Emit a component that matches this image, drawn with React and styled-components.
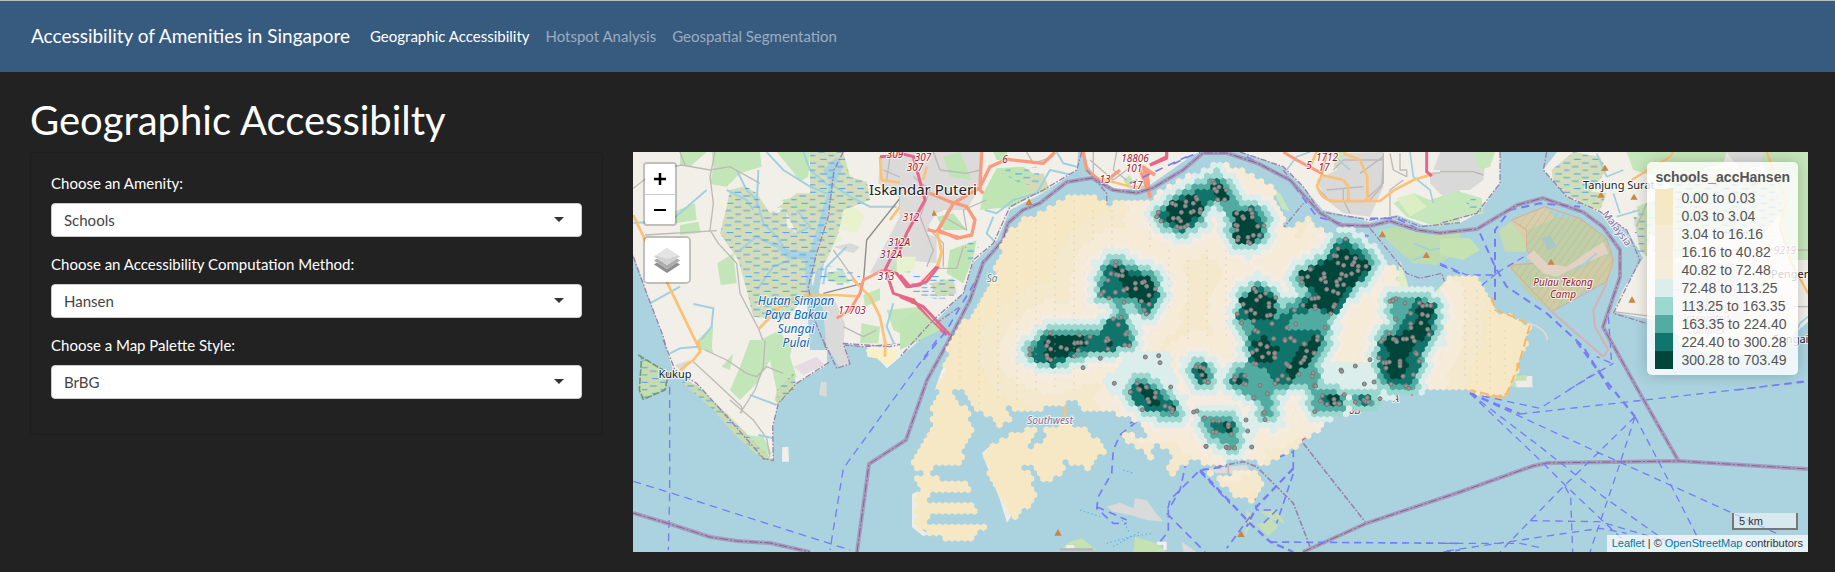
import React from "react";
import styled, { createGlobalStyle } from "styled-components";

const GlobalStyle = createGlobalStyle`
  * { box-sizing: border-box; }
  body {
    margin: 0;
    background: #222;
    color: #fff;
    font-family: Lato, "Liberation Sans", sans-serif;
    font-size: 15px;
  }
`;

/* ---------- page ---------- */

const Navbar = styled.nav`
  display: flex;
  align-items: center;
  min-height: 72px;
  padding: 0 31px 2px;
  background: #375a7f;
  border-top: 1px solid #bcbcbc;
`;
const Brand = styled.a`
  margin-right: 20px;
  color: #fff;
  font-size: 19px;
  line-height: 28px;
  text-decoration: none;
`;
const NavLinks = styled.div`
  display: flex;
  gap: 16px;
`;
const NavLink = styled.a`
  color: ${(p) => (p.$active ? "#fff" : "rgba(255, 255, 255, 0.5)")};
  line-height: 24px;
  text-decoration: none;
`;
const Main = styled.main`
  padding: 24px 27px 20px 30px;
`;
const Title = styled.h1`
  margin: 0 0 8px;
  font-size: 40px;
  font-weight: 400;
  line-height: 48px;
`;
const Columns = styled.div`
  display: grid;
  grid-template-columns: 573fr 1175fr;
  gap: 30px;
  align-items: start;
`;
const Panel = styled.form`
  padding: 18px 20px 20px;
  border: 1px solid #1d1d1d;
  border-radius: 4px;
`;
const Field = styled.div`
  margin-bottom: 15px;
`;
const Label = styled.label`
  display: block;
  margin-bottom: 7px;
  line-height: 25px;
`;
const SelectWrap = styled.div`
  position: relative;
  color: #333;
`;
const Select = styled.select`
  display: block;
  width: 100%;
  height: 34px;
  padding: 0 32px 0 12px;
  border: 1px solid #ccc;
  border-radius: 4px;
  background: #fff;
  color: #444;
  font: inherit;
  appearance: none;
`;
const Caret = styled.svg`
  position: absolute;
  top: 14px;
  right: 18px;
  width: 10px;
  height: 5px;
  fill: #333;
  pointer-events: none;
`;

/* ---------- map ---------- */

const MapFrame = styled.section`
  position: relative;
  height: 400px;
  overflow: hidden;
  background: #aad3df;
  font-family: "Liberation Sans", Arial, sans-serif;
`;
const MapCanvas = styled.svg`
  display: block;
  width: 100%;
  height: 100%;
`;
const Controls = styled.div`
  position: absolute;
  top: 10px;
  left: 10px;
  display: flex;
  flex-direction: column;
  align-items: flex-start;
  gap: 10px;
`;
const Bar = styled.div`
  border: 2px solid rgba(0, 0, 0, 0.2);
  border-radius: ${(p) => (p.$round ? 5 : 4)}px;
  background-clip: padding-box;
  overflow: hidden;
`;
const MapButton = styled.button`
  display: flex;
  align-items: center;
  justify-content: center;
  width: ${(p) => p.$size}px;
  height: ${(p) => p.$size}px;
  padding: 0;
  border: 0;
  background: #fff;
  color: #000;
  & + & {
    border-top: 1px solid #ccc;
  }
`;
const Legend = styled.aside`
  position: absolute;
  top: 10px;
  right: 10px;
  padding: 6px 8px;
  border-radius: 5px;
  background: rgba(255, 255, 255, 0.8);
  box-shadow: 0 0 15px rgba(0, 0, 0, 0.2);
  color: #555;
  font-size: 14px;
  line-height: 18px;
`;
const LegendTitle = styled.strong`
  display: block;
  padding-bottom: 3px;
`;
const LegendList = styled.ul`
  margin: 0;
  padding: 0;
  list-style: none;
`;
const LegendRow = styled.li`
  display: flex;
  gap: 8px;
`;
const Swatch = styled.span`
  width: 18px;
  height: 18px;
  background: ${(p) => p.$color};
`;
const MapFooter = styled.div`
  position: absolute;
  right: 0;
  bottom: 0;
  display: flex;
  flex-direction: column;
  align-items: flex-end;
  gap: 5px;
  color: #333;
  font-size: 11px;
`;
const ScaleLine = styled.div`
  width: 66px;
  height: 17px;
  margin-right: 10px;
  padding-left: 5px;
  border: 2px solid #777;
  border-top: 0;
  background: rgba(255, 255, 255, 0.5);
  line-height: 16px;
`;
const Attribution = styled.div`
  padding: 0 5px;
  background: rgba(255, 255, 255, 0.7);
  line-height: 17px;
  a {
    color: #0078a8;
    text-decoration: none;
  }
`;
const PlaceName = styled.text`
  fill: ${(p) => p.$color || "#222"};
  font-family: "Noto Sans", sans-serif;
  font-size: ${(p) => p.$size || 10}px;
  font-style: ${(p) => (p.$italic ? "italic" : "normal")};
  text-anchor: ${(p) => p.$anchor || "middle"};
  paint-order: stroke;
  stroke: rgba(255, 255, 255, 0.75);
  stroke-width: 2px;
  stroke-linejoin: round;
`;

/* ---------- accessibility surface ---------- */

const parse = (s) => {
  const n = s.match(/-?\d+/g).map(Number);
  return n.reduce((a, v, i) => (i % 2 ? a : [...a, [v, n[i + 1]]]), []);
};
/* Detail sheets are drawn at three units to one map unit. */
const SHEETS = {
  A: [630, 150], B: [630, 340], C: [900, 150], D: [900, 350],
  E: [1130, 150], F: [1130, 340], G: [1440, 150], H: [1440, 340],
};
const place = (id, s) => parse(s).map(([x, y]) => [SHEETS[id][0] + x / 3, SHEETS[id][1] + y / 3]);

const LAND = [
  "950,336 968,317 980,300 985,286 993,278 997,262 1001,250 1008,233 1023,218 1040,213 1057,203 1067,195 1093,193 1110,205 1125,200 1147,202 1167,187 1200,170 1217,163 1230,165 1253,175 1273,187 1275,200 1285,213 1282,230 1307,218 1330,233 1350,235 1377,253 1397,270 1400,285 1417,293 1437,293 1447,278 1457,277 1480,278 1492,297 1495,310 1512,316 1530,325 1528,340 1518,367 1507,390 1500,397 1473,392 1460,388 1440,388 1410,393 1383,401 1343,415 1320,428 1293,450 1277,458 1267,465 1240,457 1220,465 1187,460 1177,474 1165,472 1172,453 1160,445 1147,440 1137,422 1113,413 1087,410 1070,400 1060,405 1047,403 1040,411 1023,413 1003,403 1010,420 1000,425 980,413 967,397 955,386 953,392 968,413 975,433 963,447 965,467 928,468 928,478 968,480 968,490 928,492 928,502 975,503 975,513 928,515 928,525 985,526 967,543 933,535 915,528 915,493 922,491 915,480 922,475 913,463 917,447 932,430 930,417 937,397 943,370",
  "982,453 1000,440 1033,425 1038,433 1026,447 1030,453 1043,440 1047,428 1067,423 1087,428 1105,450 1088,470 1057,457 1068,472 1043,482 1033,463 1020,463 1032,477 1037,498 1015,518 1000,500",
  "1207,470 1225,476 1255,468 1263,485 1250,502 1233,495",
  "1120,438 1130,431 1155,445 1152,458",
].map(parse);

const TEAL = {
  7: [
    ["E", "75,200 120,150 180,115 235,90 260,75 310,120 320,160 380,170 410,215 400,265 360,290 320,280 300,240 295,185 270,155 230,165 210,220 150,250 110,230"],
    ["C", "610,350 650,325 700,350 760,370 780,420 750,490 720,485 690,455 670,470 700,580 640,600 570,610 450,645 380,610 400,580 450,540 540,545 600,545 640,500 660,460 600,440 600,400"],
    ["E", "500,370 540,345 590,320 605,280 645,260 700,300 735,340 700,390 650,430 610,490 590,540 590,580 560,620 565,690 560,730 600,715 640,735 640,775 555,790 550,760 530,700 480,710 430,720 430,810 390,800 400,760 360,740 300,700 320,660 365,640 350,560 330,520 320,490 340,430 380,400 430,430 450,470 490,460 540,430 500,400"],
    ["E", "780,440 830,450 870,440 920,460 915,560 880,600 870,660 850,710 840,725 780,715 750,690 745,620 750,560 800,520 780,480"],
    ["F", "670,160 730,160 730,200 680,200"],
    ["D", "690,100 720,80 770,110 830,160 840,195 790,195 740,185 680,130"],
    ["D", "870,50 890,35 930,60 935,100 900,100"],
    ["F", "220,230 260,235 310,235 330,270 315,330 270,310 235,280"],
  ],
  8: [
    ["E", "80,200 130,150 190,130 235,110 265,85 300,130 295,155 250,145 215,180 190,225 150,245 115,225"],
    ["E", "310,190 360,170 405,215 395,260 350,288 308,268"],
    ["C", "615,360 650,335 690,360 760,385 775,425 745,495 715,450 640,445 605,435"],
    ["C", "630,510 670,500 695,590 620,600 540,610 450,650 390,620 430,555 540,550 600,555"],
    ["E", "505,375 600,310 610,280 650,265 725,340 690,395 620,485 590,490 560,480 500,490 470,540 590,550 560,610 530,640 480,705 440,700 400,650 360,635 360,560 370,520 320,500 330,450 380,410 435,440 435,510 500,470 545,430"],
    ["E", "300,690 345,665 355,705 310,705"],
    ["E", "860,450 918,460 905,555 880,600 850,700 780,700 750,660 745,580 820,530"],
    ["F", "575,165 625,160 630,195 580,200"],
    ["F", "690,165 725,170 718,198 690,195"],
    ["D", "695,100 770,115 830,175 805,192 730,180 690,130"],
    ["D", "878,48 918,42 925,92 898,95"],
    ["F", "245,250 318,245 312,282 252,280"],
  ],
  9: [
    ["E", "115,155 205,132 218,170 195,205 150,243 118,215"],
    ["E", "243,92 298,120 288,155 250,135"],
    ["E", "315,190 360,182 398,235 360,280 315,272"],
    ["C", "640,340 670,365 755,385 768,430 740,470 680,430 650,380"],
    ["C", "435,560 540,555 562,590 480,620 445,645 430,620"],
    ["C", "605,570 638,560 625,590"],
    ["E", "330,455 375,412 435,450 430,505 365,508"],
    ["E", "510,370 610,325 615,298 650,300 725,345 640,430 600,485 525,478 560,425 510,395"],
    ["E", "370,580 395,555 445,600 445,625 365,640"],
    ["E", "500,600 565,555 562,605 490,685 470,650"],
    ["E", "310,690 345,680 345,705"],
    ["E", "865,460 910,460 895,560 840,590 825,690 775,685 765,640 780,620 750,570 850,535"],
    ["F", "595,172 622,172 612,192"],
    ["D", "715,105 760,125 775,165 738,165"],
    ["D", "800,165 828,172 815,190"],
    ["D", "883,48 918,50 913,88"],
    ["F", "272,245 305,248 298,272"],
  ],
};
const PALE = [
  ["F", "560,60 640,60 760,60 750,160 560,160"],
  ["D", "690,0 800,0 830,100 640,130 610,100"],
  ["F", "180,90 380,100 360,145 260,140"],
  ["F", "210,240 380,230 370,330 230,330"],
  ["E", "760,430 820,425 800,540 760,560"],
].map(([s, p]) => place(s, p));
const AREAS = Object.fromEntries(
  Object.entries(TEAL).map(([k, v]) => [k, v.map(([s, p]) => place(s, p))])
);

const inside = (x, y, poly) => {
  let hit = false;
  for (let i = 0, j = poly.length - 1; i < poly.length; j = i++) {
    const [xi, yi] = poly[i];
    const [xj, yj] = poly[j];
    if (yi > y !== yj > y && x < ((xj - xi) * (y - yi)) / (yj - yi) + xi) hit = !hit;
  }
  return hit;
};
const within = (x, y, list) => list.some((p) => inside(x, y, p));
const distance = (x, y, poly) =>
  Math.min(
    ...poly.map(([ax, ay], i) => {
      const [bx, by] = poly[(i + 1) % poly.length];
      const dx = bx - ax;
      const dy = by - ay;
      const t = Math.max(0, Math.min(1, ((x - ax) * dx + (y - ay) * dy) / (dx * dx + dy * dy)));
      return Math.hypot(x - ax - t * dx, y - ay - t * dy);
    })
  );

const classify = (x, y) => {
  if (within(x, y, AREAS[9])) return 9;
  if (within(x, y, AREAS[8])) return 8;
  if (within(x, y, AREAS[7])) return 7;
  const d = Math.min(...AREAS[7].map((p) => distance(x, y, p)));
  if (d < 5) return 6;
  if (d < 11 || within(x, y, PALE)) return 5;
  if (d < 17) return 4;
  if (d < 30) return 3;
  if (d < 48) return 2;
  return 1;
};
const FILLS = ["", "#f6e8c4", "#f5e9cd", "#f5ebd6", "#f5ecdf", "#dbeeeb", "#9ad8cf", "#52aba1", "#10746b", "#004539"];
const HEX_PATHS = (() => {
  const out = FILLS.map(() => "");
  for (let row = 0; row < 72; row++) {
    const y = 160 + row * 5.4;
    for (let col = 0; col < 102; col++) {
      const x = 908 + col * 6.3 + (row % 2 ? 3.15 : 0);
      const level = classify(x, y);
      if (level > 5 || within(x, y, LAND) || (level === 5 && y < 395)) {
        out[level] += `M${x.toFixed(1)} ${(y - 3.8).toFixed(1)}l3.3 1.9v3.8l-3.3 1.9l-3.3 -1.9v-3.8z`;
      }
    }
  }
  return out;
})();

const SCHOOLS = [
  ["E", "80,200 93,213 85,187 127,160 137,165 166,168 168,155 198,142 201,148 190,160 211,178 210,187 190,184 183,187 154,187 130,205 145,205 152,213 141,230 152,233 164,231 173,225 249,93 253,100 254,117 267,111 260,124 289,120 263,149 284,149 320,190 338,200 341,205 361,179 366,190 367,201 317,225 322,227 321,240 325,262 323,270 354,262 355,276 360,280 370,256 388,256 383,229 402,227 647,267 624,296 612,317 620,318 650,323 676,325 708,349 624,339 641,346 667,344 672,337 685,349 684,362 665,371 648,377 635,372 630,387 641,404 620,395 622,406 590,418 610,424 624,430 573,388 582,371 583,382 587,396 541,358 533,380 516,384 515,397 545,446 555,445 565,443 519,466 555,468 556,476 614,464 611,470 602,491 493,481 497,522 372,416 378,425 391,439 380,450 407,430 437,443 417,460 417,470 340,463 363,480 375,490 349,486 322,492 335,519 371,513 375,541 384,546 426,521 412,497 421,495 431,566 471,533 465,568 482,564 493,572 391,582 411,590 380,600 367,607 397,621 433,622 435,609 585,533 563,560 562,570 523,581 530,603 552,609 525,622 798,446 780,454 789,452 825,459 868,459 878,468 890,466 902,467 842,490 877,493 893,497 797,508 873,519 842,521 843,533 893,538 897,554 777,550 760,568 753,575 790,567 797,570 800,575 820,567 830,567 848,562 853,573 857,608"],
  ["C", "648,335 646,347 633,371 649,374 656,376 667,362 667,377 624,391 611,425 603,434 627,444 646,427 671,421 681,416 706,400 707,416 733,395 727,398 740,409 766,417 747,436 672,457 724,454 747,463 733,480 739,492 640,507 663,502 655,524 680,548 677,553 622,565 625,570 618,573 674,585 688,587 624,597 601,625 451,549 445,575 440,587 452,597 483,592 500,597 440,616 443,625 390,598 389,614 539,555 524,580 533,578 543,578 560,578 570,560 535,601 523,618 736,621 776,617"],
  ["D", "452,30 549,53 643,100 780,38 711,100 715,117 719,119 739,111 691,126 767,128 765,142 743,148 747,156 727,179 795,168 810,173 817,178 816,185 812,111 888,50 901,51 911,55 906,75 914,93 925,97 881,186 891,183 914,204 939,212 957,213 939,246 949,247 918,289 980,292 985,230"],
  ["F", "295,253 348,240 353,273 304,283 228,319 289,322 297,324 314,324 365,321 403,217 405,239 372,173 412,161 390,136 371,71 378,72 315,112 313,120 344,107 342,131 347,133 457,107 435,131 443,119 475,117 469,71 474,76 480,80 513,68 521,60 553,40 507,103 550,99 547,109 553,137 557,138 554,215 571,183 577,167 591,193 612,178 614,190 628,191 643,164 633,90 635,94 676,78 676,186 703,132 732,126 702,180 708,185 715,186 712,173 750,176 720,59 746,53 761,68 769,68 778,66 768,84 810,63 810,70 810,78 819,109 783,133 828,138 836,145 850,104 867,64 857,40 860,42 391,13 411,20 435,53 416,39 434,40 465,2 493,3 523,12"],
].flatMap(([s, p]) => place(s, p));

/* ---------- base map drawing ---------- */

const Sheet = ({ id, children }) => (
  <g transform={`translate(${SHEETS[id][0]} ${SHEETS[id][1]}) scale(${1 / 3})`}>{children}</g>
);
const Line = ({ d, c, w, dash, o }) => (
  <path d={d} fill="none" stroke={c} strokeWidth={w} strokeDasharray={dash} opacity={o} strokeLinejoin="round" />
);
const ORANGE = "#fbc175";
const CORAL = "#f99b7f";
const PINK = "#e8668a";
const GREY = "#bdbab8";
const RIVER = "#a3d0e0";
const FERRY = "#777df7";
const ADMIN = "#9a83ac";

const Land = () => (
  <g fill="#f2efe9">
    <path d="M633 152H827L835 180L812 290L810 330L827 350V365L797 383L778 403L773 427V461L763 457L730 420L697 387L673 370L663 337L647 293L633 254Z" />
    <path d="M838 152H1078L1077 170L1043 193L1010 210L997 240L973 263L963 293L930 327L900 357L887 368L866 347L843 343L849 364L840 368L822 310L819 290L832 220Z" />
    <path d="M1083 152L1085 162L1097 178L1117 190L1147 187L1193 155L1200 152Z" />
    <path d="M1240 152L1257 157L1283 167L1303 187L1323 210L1370 222L1397 215L1423 225L1460 223L1480 212L1500 183V152Z" />
    <path d="M1557 152L1543 170L1567 197L1600 213L1627 230L1643 258L1623 290L1613 312L1653 320L1690 350L1730 357L1775 350L1808 322V152Z" />
  </g>
);

const WestSheets = () => (
  <>
    <Sheet id="A">
      <g fill="#c3e6b8">
        <path d="M245 6H390L395 50L330 70L290 110L240 102L250 50ZM150 6H230L180 50L150 45ZM440 6H540L535 80L510 95L485 60ZM120 190L195 160L200 210L120 222ZM150 225L205 215L212 248L150 255ZM262 340L310 310L320 400L272 405ZM200 572L250 525L245 600H205ZM390 570L450 540L480 600H400ZM455 150L500 140L530 200L480 190ZM580 370L640 360L660 400L600 395Z" />
        <path d="M700 435L750 415L750 450L705 470ZM770 480L870 470L920 520L850 570L790 540ZM760 330L800 310L850 340L840 370L780 360ZM695 520L750 530L745 580H690ZM890 6L950 20L930 60L880 50ZM860 100L910 110L900 160L850 150Z" />
      </g>
      <g fill="#dadada">
        <path d="M750 20L870 6H990V160L920 190L850 290L760 370L720 370L830 160L745 100ZM545 435L610 440L645 520L640 600H590ZM840 240L920 260V340L830 330ZM610 290L660 280L690 290L670 310Z" />
      </g>
      <path d="M620 190L670 165L705 200L680 250L620 235ZM570 265L640 260L600 300L570 330ZM800 320L860 310L850 360L800 370Z" fill="#e9f2cf" />
      <path d="M290 170L300 120L345 108L380 130L420 190L500 130L540 130V6H640L660 80L710 95L720 150L640 180L625 250L590 330L545 380L530 440L460 510L370 500L350 420L325 330L270 250Z" fill="#d3ddb9" />
      <path d="M410 110L440 100L425 150L460 180L440 190L400 160ZM470 190L500 250L470 230Z" fill="#f2efe9" />
      <path d="M620 20L640 50L610 110L590 200L560 300L545 400L580 480L590 600H540L530 440L525 330L470 325L420 270L480 300L540 305L580 170L600 100L580 60Z" fill="#aad3df" />
      <g fill="none" stroke={RIVER} strokeWidth="6">
        <path d="M320 60L350 120L380 150L400 220L440 260L480 320L540 320M385 60L380 170M290 120L350 150L370 180M410 6L460 60L540 110L590 130M330 300L380 260L440 290M380 420L430 350L480 330M10 218L120 215L230 120M60 460L150 410M190 462L250 475L245 530L205 580M500 180L540 230L500 250M600 100L660 140L720 170L800 170M520 6L540 60L600 110M580 400L590 350L650 290M790 460L770 530L800 600" />
      </g>
      <path d="M290 170L300 120L345 108L380 130L420 190L500 130L540 130V6H640L660 80L710 95L720 150L640 180L625 250L590 330L545 380L530 440L460 510L370 500L350 420L325 330L270 250ZM570 340L690 370V410L570 400ZM840 380L930 370L970 420L930 450L840 430Z" fill="url(#marsh)" />
      <g fill="none" stroke={GREY} strokeWidth="4">
        <path d="M10 115L80 60L155 45L240 60L300 50L390 100M255 6L240 80L250 160L240 240L265 280L320 340L330 430L385 535L410 600M45 255L260 242M150 6L165 45M610 300L660 370L690 410M640 530L700 560L740 540M890 60L930 120L990 150M900 170L880 220L940 280L940 350M760 60L830 90M780 20L770 90M920 20L900 90" />
        <path d="M825 6L830 120L710 270L700 400L580 430" stroke="#8b8b88" />
      </g>
      <Line c={ORANGE} w={8} d="M10 195L50 280L110 395L190 560L210 600M385 538L470 450L540 435L620 435L690 440M665 385L720 440L750 500L770 600M750 20L755 90L830 100L890 60L885 30M920 240L935 310L920 350M780 210L810 170L815 110" />
      <Line c={CORAL} w={9} d="M620 505L660 480L690 430L700 390L760 360M810 185L870 235L920 245L990 262M920 245L970 160L990 150M970 160L900 120" />
      <Line c={PINK} w={9} d="M750 20L850 14L885 150L840 220L790 310L765 360L800 370L830 410L870 405L920 350M770 370L790 430L850 450L900 510L950 555M850 14L930 6" />
      <Line c={ADMIN} w={4} dash="18 5 5 5" d="M640 6L612 60L595 200L560 310L535 410L550 500L590 600M10 320L50 430L100 560L110 600M640 585L700 590L830 580L990 470" />
      <path d="M903 197L912 180L921 197ZM843 461L852 443L861 461Z" fill="#cd853f" />
    </Sheet>
    <Sheet id="B">
      <path d="M330 80L360 0H490L480 50L500 110L440 150L420 60L380 130L330 180L300 150ZM205 0H240L250 40L220 30ZM345 285L400 290L425 340L400 350ZM275 80L310 40L300 90Z" fill="#c3e6b8" />
      <path d="M440 150L490 100L500 140L445 195L435 180ZM150 120L200 135L300 230L430 362H400L310 280L250 210L160 130ZM35 50L115 100L105 150L35 178L25 150Z" fill="#c9dcae" />
      <path d="M440 150L490 100L500 140L445 195ZM150 120L200 135L430 362H400L250 210ZM35 50L115 100L105 150L35 178L25 150Z" fill="url(#marsh)" />
      <path d="M490 80L560 50L585 75L520 105Z" fill="#e6dbe3" />
      <path d="M135 75L180 60L160 100ZM580 0L630 85L660 70L640 0ZM573 125H590V170L567 165Z" fill="#dadada" />
      <path d="M457 322L475 320L477 365H456ZM706 30L740 20L870 0L770 85L750 55L720 50Z" fill="#f2efe9" />
      <path d="M710 28L800 30V60L770 75L740 55L712 50Z" fill="#fbefc5" />
      <Line c={GREY} w={4} d="M190 65L260 130L335 200L335 218M405 0L400 80L375 150L330 220M225 30L290 60L350 100L380 110L410 80L460 100M300 180L370 240L410 295L420 350" />
      <Line c={RIVER} w={6} d="M360 165L440 195M385 285L430 295M120 40L150 25L205 20" />
      <Line c={ORANGE} w={8} d="M205 0L210 35L190 60L150 90M765 0V50" />
      <Line c="#6e9a75" w={5} dash="20 5" d="M25 45L115 100L105 150L40 178L28 150L35 50" />
      <Line c={ADMIN} w={4} dash="18 5 5 5" d="M100 0L135 90L200 130L300 240L400 355L430 362L428 260L445 190L500 130L600 65M580 0L620 85L660 72L640 10L780 20L870 0" />
      <Line c={FERRY} w={4} dash="24 16" d="M119 140V460L115 630M10 424L120 458L660 630M920 0L640 385L600 630" />
    </Sheet>
    <Sheet id="C">
      <path d="M0 6H240V110L200 180L100 180L60 320H0Z" fill="#dcdbd9" />
      <path d="M250 130L290 55L370 50L420 85L410 130L340 170L240 180ZM130 20L180 6L215 90L150 80ZM110 200L160 190L200 240L130 240ZM150 300L230 270L220 320L190 400L140 370ZM0 510L60 480L120 540L60 570L0 600ZM280 6L320 6L330 30L290 30ZM670 90L690 75L700 100L680 108Z" fill="#bfe5b4" />
      <path d="M370 80L430 70L450 120L390 140ZM90 400L160 385L170 430L110 440Z" fill="#d0dcb7" />
      <path d="M290 60L410 50L430 110L360 100ZM60 380L170 390L160 450L60 440ZM200 260L240 280L220 340L190 330Z" fill="url(#marsh)" />
      <Line c={GREY} w={4} d="M100 6L120 60L200 70L240 60M40 80L90 120L60 200L100 300L80 350M110 355L170 355L190 290M130 200L200 240L190 180L260 150M380 6L400 40L460 20M570 30L640 90L720 30M580 6V80M650 6L640 60L680 90" />
      <Line c={RIVER} w={6} d="M255 180L290 190L340 150L410 130L450 60L540 80M280 200L260 250L290 280M470 6L490 40L530 50" />
      <Line c={CORAL} w={10} d="M245 6L240 110M240 110L270 50L320 28L430 40L465 6M245 110L160 160L115 240L170 265L215 255L225 210L200 170L150 155L90 130M250 130L235 115M550 6L560 60L610 100L660 60M730 50L750 140L740 60L765 75" />
      <Line c={ORANGE} w={7} d="M600 85L690 110L740 110M110 245L125 300L115 350L70 400M70 90L80 50" />
      <Line c={PINK} w={9} d="M0 10L40 20L75 150L20 250L0 300M115 350L80 395L30 410L0 375M0 440L70 470L150 555M750 45L800 25V6" />
      <Line c={ADMIN} w={4} dash="18 5 5 5" d="M545 6L530 60L430 120L330 170L280 280L220 330L190 430L100 510L0 620M560 60L620 130V170" />
      <Line c={FERRY} w={5} dash="24 18" d="M70 630L140 540L240 370L250 330" />
      <Line c={FERRY} w={5} dash="24 18" d="M820 42L870 18L900 8" />
      <path d="M376 166L387 145L398 166Z" fill="#cd853f" />
    </Sheet>
  </>
);

const EastSheets = () => (
  <>
    <Sheet id="E">
      <path d="M430 120L450 130L480 185L455 175ZM620 0H650V70L610 50ZM790 160L850 130L900 150L990 120V215L920 230L830 200Z" fill="#c6e6bb" />
      <path d="M560 90L620 60L640 10L760 6L760 110L720 200L640 190L590 150ZM900 70L990 60V120L940 140L900 100ZM930 6H990V60H910Z" fill="#d9d9d9" />
      <path d="M745 240L800 230L900 255L990 245V300L920 345L850 340L790 290Z" fill="#bddcb0" />
      <path d="M800 145L850 130L890 170L840 200ZM810 330L800 400L830 430L940 430V400L900 440L840 425Z" fill="#dcefc4" />
      <Line c={GREY} w={4} d="M610 60L640 30H760L755 110L720 150M640 115V150M560 110L600 155H700L760 100V10M590 120L700 110M690 70L760 20M780 10L790 60L830 80V60H810V10M900 70L990 65M640 150L660 190M820 90L780 120V200" />
      <Line c={RIVER} w={5} d="M470 60L500 20L540 6M600 6L660 60M840 6L850 80L900 120L910 160M950 170L990 160M850 280L900 300L960 290M850 330L900 310M560 190L700 205" />
      <Line c={ORANGE} w={8} d="M560 110L575 75M540 50L560 6M560 105C570 140 590 155 620 153H750L790 122L850 90L910 72M640 10L690 30L712 80V150M640 90L655 110V150M575 75L640 90" />
      <Line c={CORAL} w={9} d="M460 6L500 30L575 70L590 6M30 60L60 140L40 50L75 75" />
      <Line c={PINK} w={9} d="M890 6V65L905 78M60 45L110 20V6" />
      <Line c={ADMIN} w={4} dash="18 5 5 5" d="M330 6L460 50L520 110L570 185L720 210L800 200L870 230L990 218M455 240L520 160M630 225V290M720 235L830 370L870 385L935 370L945 400M460 60L475 80" />
      <Line c={FERRY} w={5} dash="24 18" d="M0 100L170 20M350 20L480 90L560 200L640 222M650 250L720 258M720 205L800 205L860 235M930 345L990 370" />
      <path d="M746 262L757 242L768 262ZM878 324L889 305L900 324Z" fill="#cd853f" />
    </Sheet>
    <Sheet id="G">
      <path d="M0 6H140L130 90L90 120L0 120Z" fill="#d9d9d9" />
      <path d="M100 6H165L150 50L120 60ZM0 140L60 125L125 145L130 190L0 215ZM560 6H860L850 40L780 60L690 90L580 60ZM590 170L640 150L700 200L650 265L600 230ZM950 6H1104V330H1050L1000 120ZM640 200L760 190V300L700 330Z" fill="#c6e6bb" />
      <path d="M0 265L90 265L120 300L70 330L0 315Z" fill="#c4e2b2" />
      <path d="M335 60L400 6L480 20L500 60L450 130L390 150L340 100ZM400 120L500 130L480 180L410 160ZM580 200L640 210L620 320L600 300ZM690 60L1000 90L1030 180L960 260L690 230Z" fill="#d3ddb9" />
      <path d="M335 60L400 6L480 20L500 60L450 130L390 150L340 100ZM400 120L500 130L480 180L410 160ZM580 180L640 190L620 320L590 320ZM640 100L1000 100L1030 180L960 260L640 230ZM70 140L120 150L125 190L90 180Z" fill="url(#marsh)" />
      <path d="M860 6H970L960 50L900 60ZM700 340H900L930 500L760 560L690 480Z" fill="#dcdcdc" />
      <path d="M560 530L640 510L720 560L700 600Z" fill="#aad3df" />
      <path d="M175 240L215 215L315 170L345 200L420 205L500 265L520 330L505 390L420 430L335 485L260 425L205 345L285 335L260 300L195 305Z" fill="#bfcfa8" />
      <path d="M215 210L315 170L345 205L265 240L260 290Z" fill="#d7cfac" />
      <path d="M175 240L215 215L265 290L255 305L195 305Z" fill="#c5dcb1" />
      <path d="M355 400L505 310L520 350L500 395L420 430L335 485L270 425Z" fill="#cdcca5" />
      <path d="M215 210L315 170L420 205L500 265L520 330L500 395L335 485L205 345L290 340L260 300V240Z" fill="url(#camp)" stroke="#dcaa93" strokeWidth="3" />
      <path d="M305 265L330 255L350 290L325 300Z" fill="#a9c6c8" />
      <path d="M260 320L280 300L320 340L380 350L430 315L490 275L505 310L420 345L350 380L310 370Z" fill="#e3d2c3" />
      <Line c={RIVER} w={5} d="M470 10L500 80L550 60M530 200L600 180M540 190L520 130M410 360L470 310M690 130L760 200L880 150L960 220M1104 500L1080 520L1060 560" />
      <Line c={ORANGE} w={7} d="M575 90L690 20L700 6M980 6L1000 60L1040 150L1020 230L1050 330L1104 430" />
      <Line c={GREY} w={4} d="M0 65H100L130 75M520 485L640 500M590 230L620 160M640 300L1104 300M1060 470H1104M800 340V560M700 420L900 420" />
      <Line c="#d5b2b2" w={6} d="M335 485L490 620L505 600L465 530L460 480L500 400" />
      <Line c={ADMIN} w={4} dash="18 5 5 5" d="M180 6L180 100L110 190L0 220M320 6L310 60L380 140L480 185L560 240L600 330L550 430L520 490L620 520" />
      <Line c={FERRY} w={6} dash="24 16" d="M120 250L165 350L200 410L320 490L430 590L510 720M165 450V240L210 180L300 160L420 170" />
      <Line c={FERRY} w={4} dash="22 14" d="M0 340L80 375H160L260 315M170 370L120 410M385 720L520 640M505 500L515 640L470 620M890 720L1104 692" />
      <path d="M484 62L495 44L506 62ZM472 143L483 124L494 143ZM571 149L582 131L593 149ZM565 458L576 439L587 458ZM322 344L333 326L344 344Z" fill="#cd853f" />
      <path d="M205 690L260 675L280 710H200Z" fill="#c2dfbb" />
      <path d="M245 515Q320 530 322 570" fill="none" stroke="#ddd9d4" strokeWidth="5" />
    </Sheet>
  </>
);

const SeaSheets = () => (
  <>
    <Sheet id="D">
      <path d="M620 470L660 458L700 475L705 445L740 450L765 485L790 515L740 510L690 495L640 485ZM845 575L890 606H850Z" fill="#dadada" />
      <path d="M480 600L510 575L545 565L590 600ZM700 606L705 560L770 580L800 606ZM440 240L460 225V250Z" fill="#c4e2b2" />
      <path d="M770 575H800V600H790V585H772ZM500 585H520L525 595H498ZM125 60L145 35L130 100L105 120ZM215 145L240 125L255 145L230 175Z" fill="#f2efe9" />
      <Line c={ORANGE} w={7} d="M495 148V205M228 98L240 112M375 297L385 312" />
      <Line c={FERRY} w={5} dash="24 16" d="M710 215L660 255L640 300L635 370L595 440L590 475L640 520H680M590 470L680 510M860 330L840 420L805 480V545L780 575M970 350L900 360L810 450L800 490L915 606M900 365L990 460" />
      <path d="M463 557L474 537L485 557Z" fill="#cd853f" />
      <path d="M480 598H580" stroke="#b9b3bc" strokeWidth="7" />
      <path d="M620 580L690 560L760 550M640 590L720 545M540 480L600 500M670 360L700 370M660 500L690 550" fill="none" stroke="#68b4dc" strokeWidth="4" strokeDasharray="4 8" />
    </Sheet>
    <Sheet id="F">
      <path d="M380 555L420 535L445 560L415 588ZM390 515L440 510L465 550L430 540ZM350 510L370 530L345 595Z" fill="#c4dfb6" />
      <path d="M230 385L290 380L350 375L360 395L320 400L260 400Z" fill="#dbdbdb" />
      <Line c={ADMIN} w={5} dash="18 5 5 5" d="M240 360L260 380L340 365L380 380L490 490L540 620M520 310L705 545" />
      <Line c={GREY} w={5} d="M295 375V400L305 412" />
      <Line c={FERRY} w={7} dash="22 14" d="M210 390L360 550L420 605L490 636M490 385L380 500L350 560" />
      <Line c={FERRY} w={5} dash="22 14" d="M420 606L990 610M490 330V400L440 550M370 460L380 510H440L400 550M215 390L290 380M450 350L490 335M360 530L290 625M0 250L20 240M940 636L990 630" />
      <Line c={PINK} w={8} d="M500 310L537 284M842 164L875 153" />
      <path d="M322 591L333 571L344 591Z" fill="#cd853f" />
    </Sheet>
    <Sheet id="H">
      <path d="M215 125L265 108H277V142H230L225 120Z" fill="#eeece8" />
      <path d="M220 108L260 105V122H225Z" fill="#c4e2b2" />
      <Line c={ORANGE} w={8} d="M262 0L235 60L215 110L200 165L180 172L80 148" />
      <Line c={FERRY} w={7} dash="22 16" d="M410 5L480 100L585 230M90 160L240 222" />
      <Line c={FERRY} w={4} dash="22 16" d="M90 160L300 205L480 90M240 222L1104 125M90 160L480 340L890 525L1020 585M90 160L300 320L490 470L680 605M90 160L310 370L380 440L560 610M585 230L350 460L180 636M585 230L540 370L450 636M585 230L690 430L795 636M375 440L392 470L398 636M270 542L480 545L700 610M10 610H240L310 625M20 633L390 578L480 565L560 580" />
    </Sheet>
  </>
);

const BORDERS = [
  "M857 552L869 464L906 440L927 380L948 342L970 300L983 263L1003 240L1008 223L1023 210L1040 203L1067 182L1092 178L1113 190L1137 193L1153 188L1183 170L1203 153L1227 153L1257 163L1290 180L1320 213L1340 225L1370 226L1390 221L1417 230L1440 233L1477 229L1517 205L1543 198L1583 212L1603 227L1620 250V277L1603 327L1638 390L1678 460",
  "M633 513L670 524L710 537L737 541L770 543L810 552",
  "M1303 552L1367 523L1460 492L1533 466L1547 463L1678 461L1808 469",
];

const ROAD_NUMBERS = [
  [895, 158, "309"], [923, 161, "307"], [915, 171, "307"], [911, 221, "312"], [899, 246, "312A"], [891, 258, "312A"],
  [886, 280, "313"], [852, 314, "17703"], [1005, 163, "6"], [1135, 162, "18806"], [1134, 172, "101"], [1105, 183, "13"],
  [1137, 189, "17"], [1327, 161, "1712"], [1309, 169, "5"], [1324, 171, "17"], [1785, 254, "9219"],
];
const COAST_NUMBERS = [[1352, 414, "16B"], [1370, 409, "5B"], [1396, 402, "A"]];

const MapDrawing = () => (
  <MapCanvas viewBox="633 152 1175 400" preserveAspectRatio="xMidYMid slice" role="img" aria-label="Map of school accessibility in Singapore">
    <defs>
      <pattern id="marsh" width="56" height="44" patternUnits="userSpaceOnUse">
        <path d="M4 6H24M36 17H52M10 28H30M34 39H54" stroke="#449ff2" strokeWidth="3" />
      </pattern>
      <pattern id="camp" width="18" height="18" patternUnits="userSpaceOnUse" patternTransform="rotate(35)">
        <path d="M2 0V18" stroke="#c8a68b" strokeWidth="2" opacity="0.7" />
      </pattern>
    </defs>
    <Land />
    <WestSheets />
    <EastSheets />
    <g fill="none">
      {BORDERS.map((d) => (
        <g key={d}>
          <path d={d} stroke="#a390b5" strokeWidth="4" opacity="0.8" />
          <path d={d} stroke="#90608d" strokeWidth="1" strokeDasharray="9 2 2 2" />
        </g>
      ))}
    </g>
    <SeaSheets />
    <path d="M912 494L918 491V528L930 534L923 536L912 527ZM1000 500L982 453L990 446L995 470L1012 515L1007 523Z" fill="#eeece7" />
    {COAST_NUMBERS.map(([x, y, t]) => (
      <PlaceName key={t} x={x} y={y} $italic $color="#a01830">{t}</PlaceName>
    ))}
    <g>
      {HEX_PATHS.map((d, i) => d && <path key={i} d={d} fill={FILLS[i]} />)}
    </g>
    <path d="M960 300V385M979 290V410M998 270V400M1017 230V405M1036 220V390M1055 210V390M1074 200V390M1093 210V240M1112 210V250M1150 210V250M1169 250V310M1188 260V340M1207 250V340M1226 250V340M1465 290V380M1477 290V385M1490 310V390M1505 330V380" stroke="#c5cba2" strokeWidth="1" strokeDasharray="2 5" opacity="0.5" fill="none" />
    <path d="M1492 297L1495 310L1512 316L1530 325L1518 367L1507 393L1500 397L1473 391" stroke="#f5b866" strokeWidth="2" fill="none" strokeDasharray="9 4" />
    <g fill="#969696" stroke="#777" strokeWidth="1">
      {SCHOOLS.map(([x, y], i) => <circle key={i} cx={x} cy={y} r="2" />)}
    </g>
    {ROAD_NUMBERS.map(([x, y, t]) => (
      <PlaceName key={`${x}-${y}`} x={x} y={y} $italic $color="#a01830">{t}</PlaceName>
    ))}
    <PlaceName x="923" y="195" $size={15}>Iskandar Puteri</PlaceName>
    {["Hutan Simpan", "Paya Bakau", "Sungai", "Pulai"].map((t, i) => (
      <PlaceName key={t} x="796" y={305 + i * 14} $size={12} $italic $color="#0b66b8">{t}</PlaceName>
    ))}
    <PlaceName x="675" y="378" $size={11}>Kukup</PlaceName>
    <PlaceName x="992" y="282" $italic $color="#72867c">Sa</PlaceName>
    <PlaceName x="1050" y="424" $italic $color="#8a6d96">Southwest</PlaceName>
    <PlaceName x="1583" y="189" $size={11} $anchor="start">Tanjung Surat</PlaceName>
    <PlaceName x="0" y="0" transform="translate(1602 214) rotate(53)" $anchor="start" $color="#8a6d96">Malaysia</PlaceName>
    <PlaceName x="1563" y="286" $italic $color="#941a2a">Pulau Tekong</PlaceName>
    <PlaceName x="1563" y="298" $italic $color="#941a2a">Camp</PlaceName>
    <PlaceName x="1771" y="278" $size={11} $anchor="start">Pengerang</PlaceName>
    <PlaceName x="1773" y="343" $size={11} $anchor="start">Sungai</PlaceName>
    {["Pengerang", "Integrated", "Complex"].map((t, i) => (
      <PlaceName key={t} x="1706" y={310 + i * 12} $italic $color="#8d7583">{t}</PlaceName>
    ))}
  </MapCanvas>
);

/* ---------- app ---------- */

const FIELDS = [
  ["amenity", "Choose an Amenity:", "Schools"],
  ["method", "Choose an Accessibility Computation Method:", "Hansen"],
  ["palette", "Choose a Map Palette Style:", "BrBG"],
];
const CLASSES = [
  ["#f6e8c3", "0.00 to 0.03"], ["#f5e8c6", "0.03 to 3.04"], ["#f5ebd6", "3.04 to 16.16"], ["#f5ebd8", "16.16 to 40.82"],
  ["#f5ecda", "40.82 to 72.48"], ["#dceeeb", "72.48 to 113.25"], ["#9bd8cf", "113.25 to 163.35"], ["#52aca2", "163.35 to 224.40"],
  ["#10756c", "224.40 to 300.28"], ["#00453a", "300.28 to 703.49"],
];

export default function App() {
  return (
    <>
      <GlobalStyle />
      <Navbar>
        <Brand href="#">Accessibility of Amenities in Singapore</Brand>
        <NavLinks>
          <NavLink href="#accessibility" $active>Geographic Accessibility</NavLink>
          <NavLink href="#hotspot">Hotspot Analysis</NavLink>
          <NavLink href="#segmentation">Geospatial Segmentation</NavLink>
        </NavLinks>
      </Navbar>
      <Main>
        <Title>Geographic Accessibilty</Title>
        <Columns>
          <Panel>
            {FIELDS.map(([id, label, value]) => (
              <Field key={id}>
                <Label htmlFor={id}>{label}</Label>
                <SelectWrap>
                  <Select id={id} defaultValue={value}>
                    <option>{value}</option>
                  </Select>
                  <Caret viewBox="0 0 10 5" aria-hidden="true"><path d="M0 0H10L5 5Z" /></Caret>
                </SelectWrap>
              </Field>
            ))}
          </Panel>
          <MapFrame>
            <MapDrawing />
            <Controls>
              <Bar>
                <MapButton type="button" $size={30} aria-label="Zoom in">
                  <svg width="12" height="12" viewBox="0 0 12 12"><path d="M6 0V12M0 6H12" stroke="#000" strokeWidth="2.5" /></svg>
                </MapButton>
                <MapButton type="button" $size={30} aria-label="Zoom out">
                  <svg width="12" height="12" viewBox="0 0 12 12"><path d="M0 6H12" stroke="#000" strokeWidth="2" /></svg>
                </MapButton>
              </Bar>
              <Bar $round>
                <MapButton type="button" $size={44} aria-label="Layers">
                  <svg width="26" height="26" viewBox="0 0 26 26">
                    <path d="M0 17.5L13 26L26 17.5L23 15.5L13 22L3 15.5Z" fill="#8f8f8f" />
                    <path d="M0 13.5L13 22L26 13.5L23 11.5L13 18L3 11.5Z" fill="#ababab" />
                    <path d="M0 9.500L13 18L26 9.500L13 1Z" fill="#d2d2d2" />
                    <path d="M2 8.500L13 1L24 8.500L13 12Z" fill="#e4e4e4" />
                  </svg>
                </MapButton>
              </Bar>
            </Controls>
            <Legend>
              <LegendTitle>schools_accHansen</LegendTitle>
              <LegendList>
                {CLASSES.map(([color, range]) => (
                  <LegendRow key={range}><Swatch $color={color} />{range}</LegendRow>
                ))}
              </LegendList>
            </Legend>
            <MapFooter>
              <ScaleLine>5 km</ScaleLine>
              <Attribution>
                <a href="#leaflet">Leaflet</a> | © <a href="#osm">OpenStreetMap</a> contributors
              </Attribution>
            </MapFooter>
          </MapFrame>
        </Columns>
      </Main>
    </>
  );
}
